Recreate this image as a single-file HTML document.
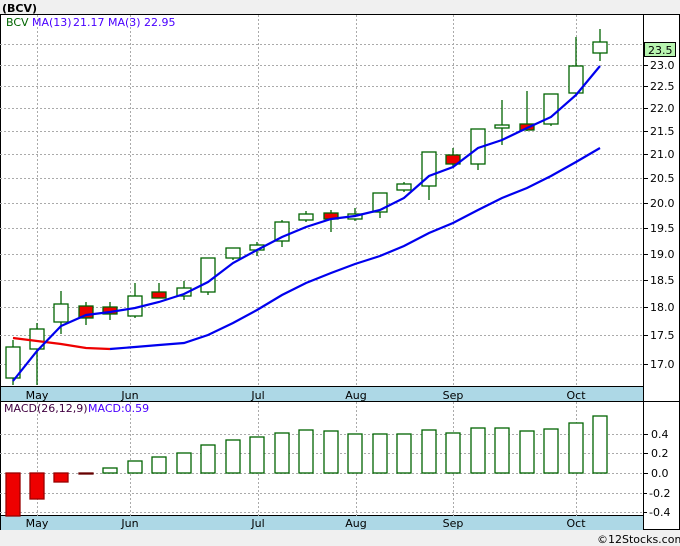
<!DOCTYPE html>
<html><head><meta charset="utf-8"><style>
html,body{margin:0;padding:0;background:#fff}
svg{display:block}
text{font-family:"DejaVu Sans","Liberation Sans",sans-serif;font-size:11px}
</style></head><body>
<svg width="680" height="546" viewBox="0 0 680 546" xmlns="http://www.w3.org/2000/svg">
<rect x="0" y="0" width="680" height="546" fill="#fff"/>
<rect x="0" y="0" width="680" height="14" fill="#f0f0f0"/>
<text x="2" y="12" font-weight="bold" font-size="13" fill="#000">(BCV)</text>
<rect x="0" y="530" width="680" height="16" fill="#f0f0f0"/>
<text x="597" y="543" font-size="10" fill="#000">©12Stocks.com</text>
<rect x="0.5" y="14.5" width="679" height="515" fill="none" stroke="#000"/>
<line x1="643.5" y1="14" x2="643.5" y2="530" stroke="#000"/>
<rect x="1" y="387" width="642" height="14" fill="#add8e6"/>
<line x1="0" y1="386.5" x2="643" y2="386.5" stroke="#000"/>
<line x1="0" y1="401.5" x2="680" y2="401.5" stroke="#000"/>
<rect x="1" y="516" width="642" height="14" fill="#add8e6"/>
<line x1="0" y1="515.5" x2="643" y2="515.5" stroke="#000"/>
<g font-size="12" fill="#000" text-anchor="middle">
<text x="37" y="399">May</text><text x="130" y="399">Jun</text><text x="258" y="399">Jul</text><text x="356" y="399">Aug</text><text x="453" y="399">Sep</text><text x="576" y="399">Oct</text>
<text x="37" y="527">May</text><text x="130" y="527">Jun</text><text x="258" y="527">Jul</text><text x="356" y="527">Aug</text><text x="453" y="527">Sep</text><text x="576" y="527">Oct</text>
</g>
<g stroke="#aaa" stroke-dasharray="2,2" stroke-width="1">
<line x1="37.5" y1="15" x2="37.5" y2="387"/><line x1="130.5" y1="15" x2="130.5" y2="387"/><line x1="258.5" y1="15" x2="258.5" y2="387"/><line x1="356.5" y1="15" x2="356.5" y2="387"/><line x1="453.5" y1="15" x2="453.5" y2="387"/><line x1="576.5" y1="15" x2="576.5" y2="387"/>
<line x1="37.5" y1="402" x2="37.5" y2="516"/><line x1="130.5" y1="402" x2="130.5" y2="516"/><line x1="258.5" y1="402" x2="258.5" y2="516"/><line x1="356.5" y1="402" x2="356.5" y2="516"/><line x1="453.5" y1="402" x2="453.5" y2="516"/><line x1="576.5" y1="402" x2="576.5" y2="516"/>
<line x1="0" y1="44.5" x2="643" y2="44.5"/><line x1="0" y1="65.5" x2="643" y2="65.5"/><line x1="0" y1="86.5" x2="643" y2="86.5"/><line x1="0" y1="108.5" x2="643" y2="108.5"/><line x1="0" y1="131.5" x2="643" y2="131.5"/><line x1="0" y1="154.5" x2="643" y2="154.5"/><line x1="0" y1="178.5" x2="643" y2="178.5"/><line x1="0" y1="203.5" x2="643" y2="203.5"/><line x1="0" y1="228.5" x2="643" y2="228.5"/><line x1="0" y1="254.5" x2="643" y2="254.5"/><line x1="0" y1="280.5" x2="643" y2="280.5"/><line x1="0" y1="307.5" x2="643" y2="307.5"/><line x1="0" y1="335.5" x2="643" y2="335.5"/><line x1="0" y1="364.5" x2="643" y2="364.5"/>
<line x1="0" y1="434.5" x2="643" y2="434.5"/><line x1="0" y1="453.5" x2="643" y2="453.5"/><line x1="0" y1="473.5" x2="643" y2="473.5"/><line x1="0" y1="493.5" x2="643" y2="493.5"/><line x1="0" y1="512.5" x2="643" y2="512.5"/>
</g>
<g fill="#000" font-size="12">
<text x="650" y="69">23.0</text><text x="650" y="90">22.5</text><text x="650" y="112">22.0</text><text x="650" y="135">21.5</text><text x="650" y="158">21.0</text><text x="650" y="182">20.5</text><text x="650" y="207">20.0</text><text x="650" y="232">19.5</text><text x="650" y="258">19.0</text><text x="650" y="284">18.5</text><text x="650" y="311">18.0</text><text x="650" y="339">17.5</text><text x="650" y="368">17.0</text>
<text x="651" y="438">0.4</text><text x="651" y="457">0.2</text><text x="651" y="477">0.0</text><text x="649" y="497">-0.2</text><text x="649" y="516">-0.4</text>
</g>
<g stroke="#000">
<line x1="643" y1="65.5" x2="648" y2="65.5"/><line x1="643" y1="86.5" x2="648" y2="86.5"/><line x1="643" y1="108.5" x2="648" y2="108.5"/><line x1="643" y1="131.5" x2="648" y2="131.5"/><line x1="643" y1="154.5" x2="648" y2="154.5"/><line x1="643" y1="178.5" x2="648" y2="178.5"/><line x1="643" y1="203.5" x2="648" y2="203.5"/><line x1="643" y1="228.5" x2="648" y2="228.5"/><line x1="643" y1="254.5" x2="648" y2="254.5"/><line x1="643" y1="280.5" x2="648" y2="280.5"/><line x1="643" y1="307.5" x2="648" y2="307.5"/><line x1="643" y1="335.5" x2="648" y2="335.5"/><line x1="643" y1="364.5" x2="648" y2="364.5"/>
<line x1="643" y1="434.5" x2="648" y2="434.5"/><line x1="643" y1="453.5" x2="648" y2="453.5"/><line x1="643" y1="473.5" x2="648" y2="473.5"/><line x1="643" y1="493.5" x2="647" y2="493.5"/><line x1="643" y1="512.5" x2="647" y2="512.5"/>
</g>
<rect x="644.5" y="42.5" width="31" height="14" fill="#b8f5b0" stroke="#000"/>
<text x="648" y="54" font-size="12" fill="#000">23.5</text>
<g font-size="10">
<text x="6" y="26" fill="#006400">BCV</text>
<text x="32" y="26" fill="#4a00ff">MA(13)</text>
<text x="73" y="26" fill="#4a00ff">21.17</text>
<text x="108" y="26" fill="#4a00ff">MA(3)</text>
<text x="144" y="26" fill="#4a00ff">22.95</text>
</g>
<g font-size="9">
<text x="4" y="412" fill="#400040">MACD(26,12,9)</text>
<text x="88" y="412" fill="#4a00ff">MACD:0.59</text>
</g>
<g stroke="#006400" stroke-width="1.3" fill="#fff">
<line x1="13" y1="340" x2="13" y2="385"/><rect x="6" y="347" width="14" height="31"/>
<line x1="37" y1="323" x2="37" y2="385"/><rect x="30" y="329" width="14" height="20"/>
<line x1="61" y1="291" x2="61" y2="334"/><rect x="54" y="304" width="14" height="18"/>
<line x1="86" y1="302" x2="86" y2="325"/><rect x="79" y="306" width="14" height="12" fill="#e00"/>
<line x1="110" y1="302" x2="110" y2="320"/><rect x="103" y="307" width="14" height="7" fill="#e00"/>
<line x1="135" y1="283" x2="135" y2="318"/><rect x="128" y="296" width="14" height="20"/>
<line x1="159" y1="283" x2="159" y2="298"/><rect x="152" y="292" width="14" height="6" fill="#e00"/>
<line x1="184" y1="281" x2="184" y2="300"/><rect x="177" y="288" width="14" height="8"/>
<line x1="208" y1="258" x2="208" y2="295"/><rect x="201" y="258" width="14" height="34"/>
<line x1="233" y1="248" x2="233" y2="260"/><rect x="226" y="248" width="14" height="10"/>
<line x1="257" y1="242" x2="257" y2="256"/><rect x="250" y="245" width="14" height="5"/>
<line x1="282" y1="220" x2="282" y2="247"/><rect x="275" y="222" width="14" height="19"/>
<line x1="306" y1="211" x2="306" y2="222"/><rect x="299" y="214" width="14" height="6"/>
<line x1="331" y1="210" x2="331" y2="232"/><rect x="324" y="213" width="14" height="6" fill="#e00"/>
<line x1="355" y1="208" x2="355" y2="221"/><rect x="348" y="214" width="14" height="5"/>
<line x1="380" y1="193" x2="380" y2="218"/><rect x="373" y="193" width="14" height="19"/>
<line x1="404" y1="182" x2="404" y2="192"/><rect x="397" y="184" width="14" height="6"/>
<line x1="429" y1="152" x2="429" y2="200"/><rect x="422" y="152" width="14" height="34"/>
<line x1="453" y1="148" x2="453" y2="166"/><rect x="446" y="155" width="14" height="9" fill="#e00"/>
<line x1="478" y1="129" x2="478" y2="170"/><rect x="471" y="129" width="14" height="35"/>
<line x1="502" y1="100" x2="502" y2="145"/><rect x="495" y="125" width="14" height="3"/>
<line x1="527" y1="91" x2="527" y2="131"/><rect x="520" y="124" width="14" height="6" fill="#e00"/>
<line x1="551" y1="94" x2="551" y2="126"/><rect x="544" y="94" width="14" height="30"/>
<line x1="576" y1="37" x2="576" y2="94"/><rect x="569" y="66" width="14" height="27"/>
<line x1="600" y1="29" x2="600" y2="61"/><rect x="593" y="42" width="14" height="11"/>
</g>
<polyline fill="none" stroke="#e00" stroke-width="2.2" points="13,338 37,341 61,344 86,348 110,349"/>
<polyline fill="none" stroke="#00e" stroke-width="2.2" points="110,349 135,347 159,345 184,343 208,335 233,323 257,310 282,295 306,283 331,273 355,264 380,256 404,246 429,233 453,223 478,210 502,198 527,188 551,176 576,162 600,148"/>
<polyline fill="none" stroke="#00e" stroke-width="2.2" points="13,381 37,351 61,326 86,315 110,312 135,308 159,302 184,294 208,282 233,263 257,250 282,237 306,227 331,219 355,216 380,210 404,198 429,176 453,167 478,148 502,140 527,128 551,117 576,95 600,66"/>
<g stroke="#006400" stroke-width="1.3" fill="#fff">
<rect x="6" y="473" width="14" height="43" fill="#e00" stroke="#900"/>
<rect x="30" y="473" width="14" height="26" fill="#e00" stroke="#900"/>
<rect x="54" y="473" width="14" height="9" fill="#e00" stroke="#900"/>
<rect x="79" y="473" width="14" height="1" fill="#600" stroke="#600"/>
<rect x="103" y="468" width="14" height="5"/>
<rect x="128" y="461" width="14" height="12"/>
<rect x="152" y="457" width="14" height="16"/>
<rect x="177" y="453" width="14" height="20"/>
<rect x="201" y="445" width="14" height="28"/>
<rect x="226" y="440" width="14" height="33"/>
<rect x="250" y="437" width="14" height="36"/>
<rect x="275" y="433" width="14" height="40"/>
<rect x="299" y="430" width="14" height="43"/>
<rect x="324" y="431" width="14" height="42"/>
<rect x="348" y="434" width="14" height="39"/>
<rect x="373" y="434" width="14" height="39"/>
<rect x="397" y="434" width="14" height="39"/>
<rect x="422" y="430" width="14" height="43"/>
<rect x="446" y="433" width="14" height="40"/>
<rect x="471" y="428" width="14" height="45"/>
<rect x="495" y="428" width="14" height="45"/>
<rect x="520" y="431" width="14" height="42"/>
<rect x="544" y="429" width="14" height="44"/>
<rect x="569" y="423" width="14" height="50"/>
<rect x="593" y="416" width="14" height="57"/>
</g>
</svg>
</body></html>
